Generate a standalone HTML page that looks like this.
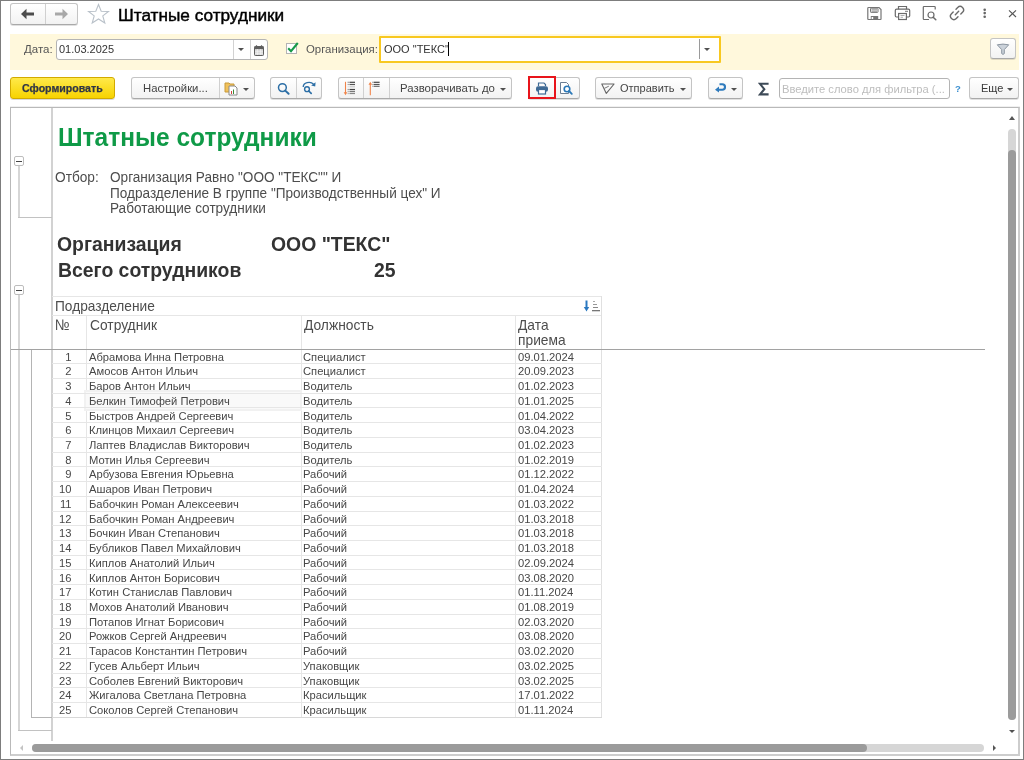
<!DOCTYPE html>
<html><head><meta charset="utf-8">
<style>
*{box-sizing:border-box;margin:0;padding:0}
html,body{width:1024px;height:760px;overflow:hidden;background:#fff;-webkit-font-smoothing:antialiased}
body{position:relative;font-family:"Liberation Sans",sans-serif;color:#333}
.a{position:absolute}
.win{left:0;top:0;width:1024px;height:760px;border:1px solid #7d7d7d}
.btn{position:absolute;height:21px;border:1px solid #c4c4c4;border-bottom-color:#a9a9a9;border-radius:3px;background:linear-gradient(#fff,#f2f2f2);box-shadow:0 1px 0 rgba(0,0,0,.12)}
.sep{position:absolute;top:0;bottom:0;width:1px;background:#d0d0d0}
.t11{font-size:11px;line-height:13px;white-space:nowrap}
.txt{position:absolute;white-space:nowrap;will-change:transform}
.dd{position:absolute;width:0;height:0;border-left:3px solid transparent;border-right:3px solid transparent;border-top:3.5px solid #505050}
.gbox{width:10px;height:10px;border:1px solid #bdbdbd;border-radius:2px;background:#fff}
.gbox:after{content:"";position:absolute;left:1px;top:4px;width:6px;height:1px;background:#444}
.r{font-size:11.2px;line-height:13px;color:#474747}
.sy{line-height:15.3px;transform:scaleY(1.11);transform-origin:0 12.4px}
</style></head><body>
<div class="a win"></div>

<!-- title bar -->
<div class="btn" style="left:10px;top:3px;width:68px;height:22px">
  <div class="sep" style="left:34px"></div>
</div>
<svg class="a" style="left:20px;top:8px" width="16" height="12" viewBox="0 0 16 12"><path d="M1 6 L6.5 0.8 L6.5 4.6 L14 4.6 L14 7.4 L6.5 7.4 L6.5 11.2 Z" fill="#4d4d4d"/></svg>
<svg class="a" style="left:53px;top:8px" width="16" height="12" viewBox="0 0 16 12"><path d="M15 6 L9.5 0.8 L9.5 4.6 L2 4.6 L2 7.4 L9.5 7.4 L9.5 11.2 Z" fill="#a8a8a8"/></svg>
<svg class="a" style="left:87px;top:3px" width="23" height="22" viewBox="0 0 23 22"><path d="M11.5 1.5 L14.2 8.2 L21.5 8.4 L15.8 12.9 L17.8 20 L11.5 16 L5.2 20 L7.2 12.9 L1.5 8.4 L8.8 8.2 Z" fill="none" stroke="#b9c1c9" stroke-width="1.1" stroke-linejoin="miter"/></svg>
<div class="txt" style="left:118px;top:4.5px;font-size:17.2px;line-height:20px;color:#000;-webkit-text-stroke:0.45px #000">Штатные сотрудники</div>

<!-- title icons -->
<svg class="a" style="left:866px;top:6px" width="17" height="15" viewBox="0 0 17 15"><path d="M2.5 1.5 H13 L15 3.5 V13 Q15 13.5 14.5 13.5 H2.5 Q1.8 13.5 1.8 13 V2.2 Q1.8 1.5 2.5 1.5 Z" fill="none" stroke="#767676" stroke-width="1.2"/><rect x="4.5" y="2.2" width="7.5" height="4.2" rx="0.6" fill="none" stroke="#767676" stroke-width="1"/><path d="M5.5 3.8 H11 M5.5 5.2 H11" stroke="#767676" stroke-width="0.8"/><rect x="4.8" y="10" width="7.4" height="3.6" fill="#767676"/><rect x="5.6" y="11" width="1.6" height="2" fill="#fff"/></svg>
<svg class="a" style="left:894px;top:5px" width="17" height="16" viewBox="0 0 17 16"><path d="M4.5 4.2 V1.5 H12.5 V4.2" fill="none" stroke="#6b6b6b" stroke-width="1.2"/><path d="M4 12 H2.5 Q1.3 12 1.3 10.8 V5.5 Q1.3 4.2 2.6 4.2 H14.4 Q15.7 4.2 15.7 5.5 V10.8 Q15.7 12 14.5 12 H13" fill="none" stroke="#6b6b6b" stroke-width="1.2"/><rect x="4.6" y="8.5" width="7.8" height="6" fill="none" stroke="#6b6b6b" stroke-width="1.2"/><path d="M6.5 10.5 H10.5 M6.5 12.3 H9" stroke="#9a9a9a" stroke-width="0.8"/><path d="M11 6.3 H14" stroke="#6b6b6b" stroke-width="0.9"/></svg>
<svg class="a" style="left:922px;top:5px" width="16" height="16" viewBox="0 0 16 16"><path d="M7 14.5 H2 Q1.3 14.5 1.3 13.8 V2.2 Q1.3 1.5 2 1.5 H12.5 Q13.2 1.5 13.2 2.2 V4.5" fill="none" stroke="#6b6b6b" stroke-width="1.2"/><circle cx="9" cy="10" r="3" fill="none" stroke="#6b6b6b" stroke-width="1.2"/><path d="M11.2 12.2 L13.8 14.8" stroke="#6b6b6b" stroke-width="1.5" stroke-linecap="round"/></svg>
<svg class="a" style="left:949px;top:5px" width="16" height="16" viewBox="0 0 16 16"><g transform="rotate(-45 8 8)" fill="none" stroke="#6b6b6b" stroke-width="1.4" stroke-linecap="round"><path d="M6 4.6 H3.6 A3.4 3.4 0 0 0 3.6 11.4 H6"/><path d="M10 4.6 H12.4 A3.4 3.4 0 0 1 12.4 11.4 H10"/><path d="M5.6 8 H10.4"/></g></svg>
<svg class="a" style="left:982px;top:8px" width="6" height="11" viewBox="0 0 6 11"><circle cx="2.7" cy="1.7" r="1.3" fill="#666"/><circle cx="2.7" cy="5.1" r="1.3" fill="#666"/><circle cx="2.7" cy="8.8" r="1.3" fill="#666"/></svg>
<svg class="a" style="left:1008px;top:9px" width="9" height="9" viewBox="0 0 9 9"><path d="M1 1.3 L8 8 M8 1.3 L1 8" stroke="#555" stroke-width="1.1"/></svg>
<!-- filter panel -->
<div class="a" style="left:10px;top:34px;width:1009px;height:36px;background:#fff8dc"></div>
<div class="txt" style="left:24px;top:41.5px;font-size:11.5px;line-height:14px;color:#555">Дата:</div>
<div class="a" style="left:56px;top:39px;width:212px;height:21px;background:#fff;border:1px solid #b4b4b4;border-radius:3px"></div>
<div class="a" style="left:233px;top:40px;width:1px;height:19px;background:#d2d2d2"></div>
<div class="a" style="left:250px;top:40px;width:1px;height:19px;background:#d2d2d2"></div>
<div class="txt t11" style="left:59px;top:43px;color:#333">01.03.2025</div>
<div class="dd" style="left:238px;top:48px"></div>
<svg class="a" style="left:254px;top:45px" width="10" height="11" viewBox="0 0 10 11"><rect x="0.5" y="1.5" width="9" height="9" rx="0.8" fill="#d9d9d9" stroke="#5e5e5e" stroke-width="1"/><rect x="0.5" y="1.5" width="9" height="2.6" fill="#5e5e5e"/><path d="M2.5 0.3 V2 M7.5 0.3 V2" stroke="#5e5e5e" stroke-width="1.2"/><path d="M3.5 4 V10 M6.5 4 V10 M1 6.3 H9 M1 8.3 H9" stroke="#f4f4f4" stroke-width="0.6"/></svg>
<svg class="a" style="left:285px;top:41px" width="15" height="14" viewBox="0 0 15 14"><rect x="1.5" y="2.5" width="10" height="10" fill="#fff" stroke="#b4b4b4"/><path d="M3.2 7.3 L6 10.2 L12.8 2" fill="none" stroke="#17994a" stroke-width="2.1"/></svg>
<div class="txt" style="left:306px;top:41.5px;font-size:11.4px;line-height:14px;color:#555">Организация:</div>
<div class="a" style="left:379px;top:36px;width:341.5px;height:26.5px;background:#fff;border:2px solid #f8c820;border-radius:1px"></div>
<div class="a" style="left:699px;top:39px;width:1px;height:20px;background:#9a9a9a"></div>
<div class="txt t11" style="left:384px;top:43px;color:#333">ООО "ТЕКС"</div>
<div class="a" style="left:448px;top:42px;width:1px;height:14px;background:#000"></div>
<div class="dd" style="left:704px;top:48px"></div>
<div class="btn" style="left:990px;top:38px;width:26px;height:21px"></div>
<svg class="a" style="left:996px;top:43px" width="14" height="13" viewBox="0 0 14 13"><path d="M1.3 1.8 Q7 0.4 12.7 1.8 L8.3 6.6 V10.6 Q7 12.2 5.7 10.6 V6.6 Z" fill="#cbd2da" stroke="#8c96a1" stroke-width="1"/></svg>

<!-- toolbar -->
<div class="a" style="left:10px;top:77px;width:105px;height:22px;border:1px solid #d2aa00;border-radius:3px;background:linear-gradient(#ffe94a,#f7d300);box-shadow:0 1px 0 rgba(0,0,0,.15)"></div>
<div class="txt" style="left:22px;top:82px;font-size:10.6px;line-height:13px;font-weight:bold;color:#303646;-webkit-text-stroke:0.25px #303646">Сформировать</div>

<div class="btn" style="left:131px;top:77px;width:124px;height:22px"><div class="sep" style="left:87px"></div></div>
<div class="txt" style="left:142.5px;top:81.3px;font-size:11.3px;line-height:14px;color:#444">Настройки...</div>
<svg class="a" style="left:224px;top:81px" width="16" height="15" viewBox="0 0 16 15"><path d="M1 2 H5 L6 3 H10 V11 H1 Z" fill="#f1c15a" stroke="#c89a3a" stroke-width="1"/><path d="M5 5 H11 L13 7 V14 H5 Z" fill="#fff" stroke="#8a8a8a" stroke-width="1"/><rect x="7" y="10" width="1" height="3" fill="#d04040"/><rect x="9" y="8.5" width="1" height="4.5" fill="#3a8a3a"/></svg>
<div class="dd" style="left:243px;top:88px"></div>

<div class="btn" style="left:270px;top:77px;width:52px;height:22px"><div class="sep" style="left:25px"></div></div>
<svg class="a" style="left:276px;top:82px" width="15" height="14" viewBox="0 0 15 14"><circle cx="6.4" cy="5.6" r="3.9" fill="none" stroke="#2d6fa6" stroke-width="1.5"/><path d="M9.3 8.6 L12.6 11.8" stroke="#2d6fa6" stroke-width="2" stroke-linecap="round"/></svg>
<svg class="a" style="left:301px;top:81px" width="16" height="14" viewBox="0 0 16 14"><path d="M2.2 6 A5.8 4.6 0 0 1 12.6 3.2" fill="none" stroke="#2d6fa6" stroke-width="1.3"/><path d="M14.6 1.2 L14.2 5.6 L10.2 4.4 Z" fill="#2d6fa6"/><circle cx="6" cy="8.2" r="2.4" fill="none" stroke="#2d6fa6" stroke-width="1.4"/><path d="M7.8 10 L10.2 12.4" stroke="#2d6fa6" stroke-width="1.7" stroke-linecap="round"/></svg>

<div class="btn" style="left:338px;top:77px;width:174px;height:22px"><div class="sep" style="left:24px"></div><div class="sep" style="left:50px"></div></div>
<svg class="a" style="left:343px;top:81px" width="16" height="16" viewBox="0 0 16 16"><path d="M2.5 0.8 V12.5" stroke="#f0844a" stroke-width="1.1"/><path d="M0.7 11.3 L2.5 14.3 L4.3 11.3 Z" fill="#f0844a"/><rect x="4.6" y="0.7000000000000001" width="1.2" height="1.2" fill="#444" opacity=".6"/><rect x="6.5" y="0.7000000000000001" width="5.5" height="1.2" fill="#444"/><rect x="4.6" y="2.9" width="1.2" height="1.2" fill="#555" opacity=".6"/><rect x="6.5" y="2.9" width="5.5" height="1.2" fill="#555"/><rect x="4.6" y="5.2" width="1.2" height="1.2" fill="#c8c8c8" opacity=".6"/><rect x="6.5" y="5.2" width="5.5" height="1.2" fill="#c8c8c8"/><rect x="4.6" y="7.9" width="1.2" height="1.2" fill="#444" opacity=".6"/><rect x="6.5" y="7.9" width="5.5" height="1.2" fill="#444"/><rect x="4.6" y="9.9" width="1.2" height="1.2" fill="#777" opacity=".6"/><rect x="6.5" y="9.9" width="5.5" height="1.2" fill="#777"/><rect x="4.6" y="11.9" width="1.2" height="1.2" fill="#888" opacity=".6"/><rect x="6.5" y="11.9" width="5.5" height="1.2" fill="#888"/></svg>
<svg class="a" style="left:368px;top:81px" width="14" height="16" viewBox="0 0 14 16"><path d="M2.3 2.5 V14.2" stroke="#f0844a" stroke-width="1.1"/><path d="M0.5 3.8 L2.3 0.8 L4.1 3.8 Z" fill="#f0844a"/><rect x="4.3" y="0.7000000000000001" width="1.5" height="1.2" fill="#444" opacity=".6"/><rect x="6" y="0.7000000000000001" width="5.6" height="1.2" fill="#444"/><rect x="4.3" y="2.9" width="1.5" height="1.2" fill="#555" opacity=".6"/><rect x="6" y="2.9" width="5.6" height="1.2" fill="#555"/><rect x="4.3" y="4.800000000000001" width="1.5" height="1.2" fill="#777" opacity=".6"/><rect x="6" y="4.800000000000001" width="5.6" height="1.2" fill="#777"/></svg>
<div class="txt" style="left:399.5px;top:81.3px;font-size:11.4px;line-height:14px;color:#444">Разворачивать до</div>
<div class="dd" style="left:500px;top:88px"></div>

<div class="btn" style="left:528px;top:77px;width:52px;height:22px"><div class="sep" style="left:26px"></div></div>
<div class="a" style="left:528px;top:76px;width:28px;height:23px;border:2px solid #e8141b"></div>
<svg class="a" style="left:535px;top:82px" width="14" height="13" viewBox="0 0 14 13"><path d="M3.5 4 V1 H9 L10.5 2.5 V4" fill="none" stroke="#3f6a95" stroke-width="1.2"/><rect x="1" y="4.2" width="12" height="5.5" rx="2" fill="#3f6a95"/><rect x="3.5" y="7.5" width="7" height="4.5" fill="#fff" stroke="#3f6a95" stroke-width="1.2"/></svg>
<svg class="a" style="left:559px;top:81px" width="15" height="15" viewBox="0 0 15 15"><path d="M1.5 1.5 H7.5 L9.5 3.5 V12.5 H1.5 Z" fill="#fff" stroke="#6a7d92" stroke-width="1"/><circle cx="8" cy="8" r="2.8" fill="#fff" stroke="#2a78b8" stroke-width="1.6"/><path d="M10 10 L12.8 12.8" stroke="#2a78b8" stroke-width="1.8" stroke-linecap="round"/></svg>

<div class="btn" style="left:595px;top:77px;width:97px;height:22px"></div>
<svg class="a" style="left:600px;top:82px" width="16" height="13" viewBox="0 0 16 13"><path d="M1.8 2 L14.1 2 L6.3 11.4 Z" fill="none" stroke="#666" stroke-width="1.1" stroke-linejoin="round"/><path d="M4.3 6.4 L8.8 4.2" stroke="#777" stroke-width="1"/></svg>
<div class="txt t11" style="left:620px;top:81.8px;color:#444">Отправить</div>
<div class="dd" style="left:680px;top:88px"></div>

<div class="btn" style="left:708px;top:77px;width:35px;height:22px"></div>
<svg class="a" style="left:714px;top:82px" width="13" height="12" viewBox="0 0 13 12"><path d="M5.5 2.3 H8.3 A2.7 2.7 0 0 1 8.3 7.7 H4" fill="none" stroke="#2f7bbd" stroke-width="2.1"/><path d="M1 7.7 L5 4.6 L5 10.6 Z" fill="#2f7bbd"/></svg>
<div class="dd" style="left:731px;top:88px"></div>

<svg class="a" style="left:758px;top:82px" width="12" height="14" viewBox="0 0 12 14"><path d="M10.6 1.8 H2 L6.3 7.2 L2 12.4 H10.6" fill="none" stroke="#3d4a57" stroke-width="2.1" stroke-linejoin="miter"/></svg>

<div class="a" style="left:779px;top:78px;width:171px;height:21px;background:#fff;border:1px solid #b4b4b4;border-radius:3px"></div>
<div class="txt" style="left:781.5px;top:82.5px;font-size:11.2px;line-height:13px;color:#bdbdbd">Введите слово для фильтра (...</div>
<div class="txt" style="left:955px;top:82.7px;font-size:9.5px;line-height:11px;font-weight:bold;color:#3a8fd0">?</div>

<div class="btn" style="left:969px;top:77px;width:50px;height:22px"></div>
<div class="txt" style="left:980.5px;top:81.8px;font-size:11px;line-height:13px;color:#3a3a3a">Еще</div>
<div class="dd" style="left:1007px;top:88px"></div>

<!-- report -->
<div class="a" style="left:51px;top:108px;width:2px;height:633px;background:#d2d2d2"></div>
<div class="a gbox" style="left:14px;top:156px"></div>
<div class="a" style="left:18px;top:166px;width:2px;height:52px;background:#d6d6d6"></div>
<div class="a" style="left:18px;top:217px;width:34px;height:1px;background:#c2c2c2"></div>
<div class="a gbox" style="left:14px;top:285px"></div>
<div class="a" style="left:18px;top:295px;width:2px;height:436px;background:#d6d6d6"></div>
<div class="a" style="left:18px;top:730px;width:34px;height:1px;background:#c2c2c2"></div>
<div class="a" style="left:31px;top:349px;width:1px;height:368px;background:#b4b4b4"></div>
<div class="a" style="left:31px;top:717px;width:21px;height:1px;background:#b4b4b4"></div>
<div class="txt" style="left:57.5px;top:122.3px;font-size:24.5px;line-height:28px;font-weight:bold;color:#0f9a47;transform:scaleY(1.09);transform-origin:0 0">Штатные сотрудники</div>
<div class="txt sy" style="left:55px;top:170px;font-size:13.7px;color:#4d4d4d">Отбор:</div>
<div class="txt sy" style="left:110px;top:170px;font-size:13.6px;color:#4d4d4d">Организация Равно "ООО "ТЕКС"" И</div>
<div class="txt sy" style="left:110px;top:186px;font-size:13.6px;color:#4d4d4d">Подразделение В группе "Производственный цех" И</div>
<div class="txt sy" style="left:110px;top:200.6px;font-size:13.6px;color:#4d4d4d">Работающие сотрудники</div>
<div class="txt" style="left:57px;top:233.2px;font-size:19.4px;line-height:22px;font-weight:bold;color:#333">Организация</div>
<div class="txt" style="left:271px;top:233.2px;font-size:19.4px;line-height:22px;font-weight:bold;color:#333">ООО "ТЕКС"</div>
<div class="txt" style="left:57.8px;top:259px;font-size:19.4px;line-height:22px;font-weight:bold;color:#333">Всего сотрудников</div>
<div class="txt" style="left:374px;top:259px;font-size:19.4px;line-height:22px;font-weight:bold;color:#333">25</div>
<div class="a" style="left:52px;top:296px;width:550px;height:1px;background:#e6e6e6"></div>
<div class="a" style="left:52px;top:315px;width:550px;height:1px;background:#e6e6e6"></div>
<div class="a" style="left:601px;top:296px;width:1px;height:422px;background:#e0e0e0"></div>
<div class="txt sy" style="left:55px;top:299px;font-size:13.7px;color:#4d4d4d">Подразделение</div>
<svg class="a" style="left:583px;top:300px" width="17" height="12" viewBox="0 0 17 12"><path d="M3.5 0.5 V8" stroke="#2a78c0" stroke-width="2"/><path d="M0.8 7 L3.5 11.5 L6.2 7 Z" fill="#2a78c0"/><rect x="10" y="1" width="2" height="1" fill="#aaa"/><rect x="10" y="4" width="4" height="1" fill="#999"/><rect x="10" y="7" width="5" height="1" fill="#888"/><rect x="9" y="10" width="8" height="1.3" fill="#777"/></svg>
<div class="a" style="left:86px;top:316px;width:1px;height:402px;background:#e6e6e6"></div>
<div class="a" style="left:301px;top:316px;width:1px;height:402px;background:#e6e6e6"></div>
<div class="a" style="left:515px;top:316px;width:1px;height:402px;background:#e6e6e6"></div>
<div class="txt sy" style="left:55px;top:317.7px;font-size:13.8px;color:#4d4d4d">№</div>
<div class="txt sy" style="left:90px;top:317.7px;font-size:13.8px;color:#4d4d4d">Сотрудник</div>
<div class="txt sy" style="left:304px;top:317.7px;font-size:13.8px;color:#4d4d4d">Должность</div>
<div class="txt sy" style="left:518px;top:317.7px;font-size:13.8px;color:#4d4d4d">Дата</div>
<div class="txt sy" style="left:518px;top:333px;font-size:13.8px;color:#4d4d4d">приема</div>
<div class="a" style="left:84px;top:390px;width:218px;height:21px;background:#f9f9f9;border:2px solid #f1f1f1"></div>
<div class="a" style="left:10px;top:349px;width:975px;height:1px;background:#a2a2a2"></div>
<div class="a" style="left:52px;top:363px;width:550px;height:1px;background:#e6e6e6"></div>
<div class="txt r" style="top:350.60px;left:52px;width:19.5px;text-align:right">1</div>
<div class="txt r" style="top:350.60px;left:89px">Абрамова Инна Петровна</div>
<div class="txt r" style="top:350.60px;left:303px">Специалист</div>
<div class="txt r" style="top:350.60px;left:518px">09.01.2024</div>
<div class="a" style="left:52px;top:378px;width:550px;height:1px;background:#e6e6e6"></div>
<div class="txt r" style="top:365.33px;left:52px;width:19.5px;text-align:right">2</div>
<div class="txt r" style="top:365.33px;left:89px">Амосов Антон Ильич</div>
<div class="txt r" style="top:365.33px;left:303px">Специалист</div>
<div class="txt r" style="top:365.33px;left:518px">20.09.2023</div>
<div class="a" style="left:52px;top:393px;width:550px;height:1px;background:#e6e6e6"></div>
<div class="txt r" style="top:380.06px;left:52px;width:19.5px;text-align:right">3</div>
<div class="txt r" style="top:380.06px;left:89px">Баров Антон Ильич</div>
<div class="txt r" style="top:380.06px;left:303px">Водитель</div>
<div class="txt r" style="top:380.06px;left:518px">01.02.2023</div>
<div class="a" style="left:52px;top:407px;width:550px;height:1px;background:#e6e6e6"></div>
<div class="txt r" style="top:394.79px;left:52px;width:19.5px;text-align:right">4</div>
<div class="txt r" style="top:394.79px;left:89px">Белкин Тимофей Петрович</div>
<div class="txt r" style="top:394.79px;left:303px">Водитель</div>
<div class="txt r" style="top:394.79px;left:518px">01.01.2025</div>
<div class="a" style="left:52px;top:422px;width:550px;height:1px;background:#e6e6e6"></div>
<div class="txt r" style="top:409.52px;left:52px;width:19.5px;text-align:right">5</div>
<div class="txt r" style="top:409.52px;left:89px">Быстров Андрей Сергеевич</div>
<div class="txt r" style="top:409.52px;left:303px">Водитель</div>
<div class="txt r" style="top:409.52px;left:518px">01.04.2022</div>
<div class="a" style="left:52px;top:437px;width:550px;height:1px;background:#e6e6e6"></div>
<div class="txt r" style="top:424.25px;left:52px;width:19.5px;text-align:right">6</div>
<div class="txt r" style="top:424.25px;left:89px">Клинцов Михаил Сергеевич</div>
<div class="txt r" style="top:424.25px;left:303px">Водитель</div>
<div class="txt r" style="top:424.25px;left:518px">03.04.2023</div>
<div class="a" style="left:52px;top:452px;width:550px;height:1px;background:#e6e6e6"></div>
<div class="txt r" style="top:438.98px;left:52px;width:19.5px;text-align:right">7</div>
<div class="txt r" style="top:438.98px;left:89px">Лаптев Владислав Викторович</div>
<div class="txt r" style="top:438.98px;left:303px">Водитель</div>
<div class="txt r" style="top:438.98px;left:518px">01.02.2023</div>
<div class="a" style="left:52px;top:466px;width:550px;height:1px;background:#e6e6e6"></div>
<div class="txt r" style="top:453.71px;left:52px;width:19.5px;text-align:right">8</div>
<div class="txt r" style="top:453.71px;left:89px">Мотин Илья Сергеевич</div>
<div class="txt r" style="top:453.71px;left:303px">Водитель</div>
<div class="txt r" style="top:453.71px;left:518px">01.02.2019</div>
<div class="a" style="left:52px;top:481px;width:550px;height:1px;background:#e6e6e6"></div>
<div class="txt r" style="top:468.44px;left:52px;width:19.5px;text-align:right">9</div>
<div class="txt r" style="top:468.44px;left:89px">Арбузова Евгения Юрьевна</div>
<div class="txt r" style="top:468.44px;left:303px">Рабочий</div>
<div class="txt r" style="top:468.44px;left:518px">01.12.2022</div>
<div class="a" style="left:52px;top:496px;width:550px;height:1px;background:#e6e6e6"></div>
<div class="txt r" style="top:483.17px;left:52px;width:19.5px;text-align:right">10</div>
<div class="txt r" style="top:483.17px;left:89px">Ашаров Иван Петрович</div>
<div class="txt r" style="top:483.17px;left:303px">Рабочий</div>
<div class="txt r" style="top:483.17px;left:518px">01.04.2024</div>
<div class="a" style="left:52px;top:511px;width:550px;height:1px;background:#e6e6e6"></div>
<div class="txt r" style="top:497.90px;left:52px;width:19.5px;text-align:right">11</div>
<div class="txt r" style="top:497.90px;left:89px">Бабочкин Роман Алексеевич</div>
<div class="txt r" style="top:497.90px;left:303px">Рабочий</div>
<div class="txt r" style="top:497.90px;left:518px">01.03.2022</div>
<div class="a" style="left:52px;top:525px;width:550px;height:1px;background:#e6e6e6"></div>
<div class="txt r" style="top:512.63px;left:52px;width:19.5px;text-align:right">12</div>
<div class="txt r" style="top:512.63px;left:89px">Бабочкин Роман Андреевич</div>
<div class="txt r" style="top:512.63px;left:303px">Рабочий</div>
<div class="txt r" style="top:512.63px;left:518px">01.03.2018</div>
<div class="a" style="left:52px;top:540px;width:550px;height:1px;background:#e6e6e6"></div>
<div class="txt r" style="top:527.36px;left:52px;width:19.5px;text-align:right">13</div>
<div class="txt r" style="top:527.36px;left:89px">Бочкин Иван Степанович</div>
<div class="txt r" style="top:527.36px;left:303px">Рабочий</div>
<div class="txt r" style="top:527.36px;left:518px">01.03.2018</div>
<div class="a" style="left:52px;top:555px;width:550px;height:1px;background:#e6e6e6"></div>
<div class="txt r" style="top:542.09px;left:52px;width:19.5px;text-align:right">14</div>
<div class="txt r" style="top:542.09px;left:89px">Бубликов Павел Михайлович</div>
<div class="txt r" style="top:542.09px;left:303px">Рабочий</div>
<div class="txt r" style="top:542.09px;left:518px">01.03.2018</div>
<div class="a" style="left:52px;top:569px;width:550px;height:1px;background:#e6e6e6"></div>
<div class="txt r" style="top:556.82px;left:52px;width:19.5px;text-align:right">15</div>
<div class="txt r" style="top:556.82px;left:89px">Киплов Анатолий Ильич</div>
<div class="txt r" style="top:556.82px;left:303px">Рабочий</div>
<div class="txt r" style="top:556.82px;left:518px">02.09.2024</div>
<div class="a" style="left:52px;top:584px;width:550px;height:1px;background:#e6e6e6"></div>
<div class="txt r" style="top:571.55px;left:52px;width:19.5px;text-align:right">16</div>
<div class="txt r" style="top:571.55px;left:89px">Киплов Антон Борисович</div>
<div class="txt r" style="top:571.55px;left:303px">Рабочий</div>
<div class="txt r" style="top:571.55px;left:518px">03.08.2020</div>
<div class="a" style="left:52px;top:599px;width:550px;height:1px;background:#e6e6e6"></div>
<div class="txt r" style="top:586.28px;left:52px;width:19.5px;text-align:right">17</div>
<div class="txt r" style="top:586.28px;left:89px">Котин Станислав Павлович</div>
<div class="txt r" style="top:586.28px;left:303px">Рабочий</div>
<div class="txt r" style="top:586.28px;left:518px">01.11.2024</div>
<div class="a" style="left:52px;top:614px;width:550px;height:1px;background:#e6e6e6"></div>
<div class="txt r" style="top:601.01px;left:52px;width:19.5px;text-align:right">18</div>
<div class="txt r" style="top:601.01px;left:89px">Мохов Анатолий Иванович</div>
<div class="txt r" style="top:601.01px;left:303px">Рабочий</div>
<div class="txt r" style="top:601.01px;left:518px">01.08.2019</div>
<div class="a" style="left:52px;top:628px;width:550px;height:1px;background:#e6e6e6"></div>
<div class="txt r" style="top:615.74px;left:52px;width:19.5px;text-align:right">19</div>
<div class="txt r" style="top:615.74px;left:89px">Потапов Игнат Борисович</div>
<div class="txt r" style="top:615.74px;left:303px">Рабочий</div>
<div class="txt r" style="top:615.74px;left:518px">02.03.2020</div>
<div class="a" style="left:52px;top:643px;width:550px;height:1px;background:#e6e6e6"></div>
<div class="txt r" style="top:630.47px;left:52px;width:19.5px;text-align:right">20</div>
<div class="txt r" style="top:630.47px;left:89px">Рожков Сергей Андреевич</div>
<div class="txt r" style="top:630.47px;left:303px">Рабочий</div>
<div class="txt r" style="top:630.47px;left:518px">03.08.2020</div>
<div class="a" style="left:52px;top:658px;width:550px;height:1px;background:#e6e6e6"></div>
<div class="txt r" style="top:645.20px;left:52px;width:19.5px;text-align:right">21</div>
<div class="txt r" style="top:645.20px;left:89px">Тарасов Константин Петрович</div>
<div class="txt r" style="top:645.20px;left:303px">Рабочий</div>
<div class="txt r" style="top:645.20px;left:518px">03.02.2020</div>
<div class="a" style="left:52px;top:673px;width:550px;height:1px;background:#e6e6e6"></div>
<div class="txt r" style="top:659.93px;left:52px;width:19.5px;text-align:right">22</div>
<div class="txt r" style="top:659.93px;left:89px">Гусев Альберт Ильич</div>
<div class="txt r" style="top:659.93px;left:303px">Упаковщик</div>
<div class="txt r" style="top:659.93px;left:518px">03.02.2025</div>
<div class="a" style="left:52px;top:687px;width:550px;height:1px;background:#e6e6e6"></div>
<div class="txt r" style="top:674.66px;left:52px;width:19.5px;text-align:right">23</div>
<div class="txt r" style="top:674.66px;left:89px">Соболев Евгений Викторович</div>
<div class="txt r" style="top:674.66px;left:303px">Упаковщик</div>
<div class="txt r" style="top:674.66px;left:518px">03.02.2025</div>
<div class="a" style="left:52px;top:702px;width:550px;height:1px;background:#e6e6e6"></div>
<div class="txt r" style="top:689.39px;left:52px;width:19.5px;text-align:right">24</div>
<div class="txt r" style="top:689.39px;left:89px">Жигалова Светлана Петровна</div>
<div class="txt r" style="top:689.39px;left:303px">Красильщик</div>
<div class="txt r" style="top:689.39px;left:518px">17.01.2022</div>
<div class="a" style="left:52px;top:717px;width:550px;height:1px;background:#d8d8d8"></div>
<div class="txt r" style="top:704.12px;left:52px;width:19.5px;text-align:right">25</div>
<div class="txt r" style="top:704.12px;left:89px">Соколов Сергей Степанович</div>
<div class="txt r" style="top:704.12px;left:303px">Красильщик</div>
<div class="txt r" style="top:704.12px;left:518px">01.11.2024</div>
<div class="dd" style="left:1009px;top:116px;border-top:none;border-bottom:4px solid #555"></div>
<div class="a" style="left:1008px;top:129px;width:8px;height:591px;border-radius:4px;background:#d6d6d6"></div>
<div class="a" style="left:1008px;top:150px;width:8px;height:570px;border-radius:4px;background:#9b9b9b"></div>
<div class="dd" style="left:1009px;top:730px"></div>
<div class="a" style="left:32px;top:744px;width:952px;height:8px;border-radius:4px;background:#d6d6d6"></div>
<div class="a" style="left:32px;top:744px;width:835px;height:8px;border-radius:4px;background:#9b9b9b"></div>
<div class="a" style="left:19.5px;top:745px;width:0;height:0;border-top:3px solid transparent;border-bottom:3px solid transparent;border-right:3.5px solid #c4c4c4"></div>
<div class="a" style="left:993px;top:745px;width:0;height:0;border-top:3px solid transparent;border-bottom:3px solid transparent;border-left:3.5px solid #555"></div>
<!-- report frame -->
<div class="a" style="left:10px;top:107px;width:1010px;height:649px;border:1px solid #b9b9b9;border-right:2px solid #cdcdcd;border-bottom:2px solid #cdcdcd;box-shadow:0 -1px 0 #f0f0f0"></div>

</body></html>
